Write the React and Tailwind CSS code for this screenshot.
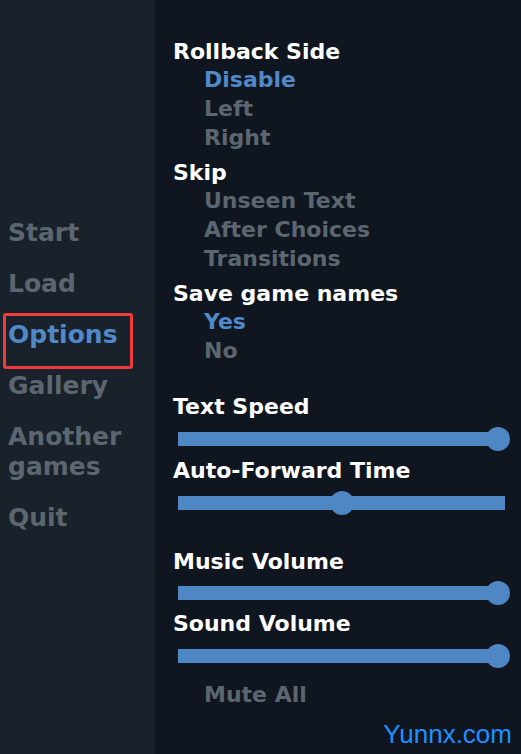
import React from 'react';

const menu = [
  { label: 'Start' },
  { label: 'Load' },
  { label: 'Options', active: true },
  { label: 'Gallery' },
  { label: 'Another\ngames' },
  { label: 'Quit' },
];

const groups = [
  { title: 'Rollback Side', items: [['Disable', true], ['Left'], ['Right']] },
  { title: 'Skip', items: [['Unseen Text'], ['After Choices'], ['Transitions']] },
  { title: 'Save game names', items: [['Yes', true], ['No']] },
];

const Slider = ({ value, tight }) => (
  <div className={`${tight ? 'h-[36px]' : 'h-[38px]'} flex items-center pl-[5px]`}>
    <div className="relative w-[327px] h-[14px] bg-[#4f86c4]">
      <div
        className="absolute top-1/2 -translate-y-1/2 w-[24px] h-[24px] rounded-full bg-[#4f86c4]"
        style={{ left: `${value * 313 - 5}px` }}
      />
    </div>
  </div>
);

const Label = ({ children }) => (
  <div className="text-[22px] leading-[26px] font-bold text-white">{children}</div>
);

export default function App() {
  return (
    <div
      className="relative flex w-[521px] h-[754px] overflow-hidden"
      style={{ fontFamily: '"DejaVu Sans", sans-serif' }}
    >
      {/* Main menu */}
      <div className="w-[155px] shrink-0 bg-[#19212a] pt-[218px] pl-[8px]">
        {menu.map((m) => (
          <div
            key={m.label}
            className={`relative mb-[21px] text-[25px] leading-[30px] font-bold whitespace-pre-line ${
              m.active ? 'text-[#5088c8]' : 'text-[#5b6670]'
            }`}
          >
            {m.label}
            {m.active && (
              <div className="absolute left-[-5px] top-[-7px] w-[130px] h-[56px] border-[3px] border-[#ee3b3b] rounded-[3px]" />
            )}
          </div>
        ))}
      </div>

      {/* Preferences */}
      <div className="flex-1 bg-[#0f1620] pt-[39px] pl-[18px] font-bold">
        {groups.map((g, i) => (
          <div key={g.title} className={i > 0 ? 'mt-[8px]' : ''}>
            <Label>{g.title}</Label>
            {g.items.map(([t, on]) => (
              <div
                key={t}
                className={`pl-[31px] text-[22px] leading-[29px] ${
                  on ? 'text-[#5088c8]' : 'text-[#5b6670]'
                }`}
              >
                {t}
              </div>
            ))}
          </div>
        ))}

        <div className="mt-[29px]">
          <Label>Text Speed</Label>
          <Slider value={1} />
          <Label>Auto-Forward Time</Label>
          <Slider value={0.5} />
        </div>

        <div className="mt-[27px]">
          <Label>Music Volume</Label>
          <Slider value={1} tight />
          <Label>Sound Volume</Label>
          <Slider value={1} />
        </div>

        <div className="mt-[5px] pl-[31px] text-[22px] leading-[29px] text-[#5b6670]">Mute All</div>
      </div>

      <div
        className="absolute right-[9px] bottom-[5px] text-[26px] leading-[30px] text-[#1e90ff]"
        style={{ fontFamily: '"Liberation Sans", Arial, sans-serif' }}
      >
        Yunnx.com
      </div>
    </div>
  );
}
